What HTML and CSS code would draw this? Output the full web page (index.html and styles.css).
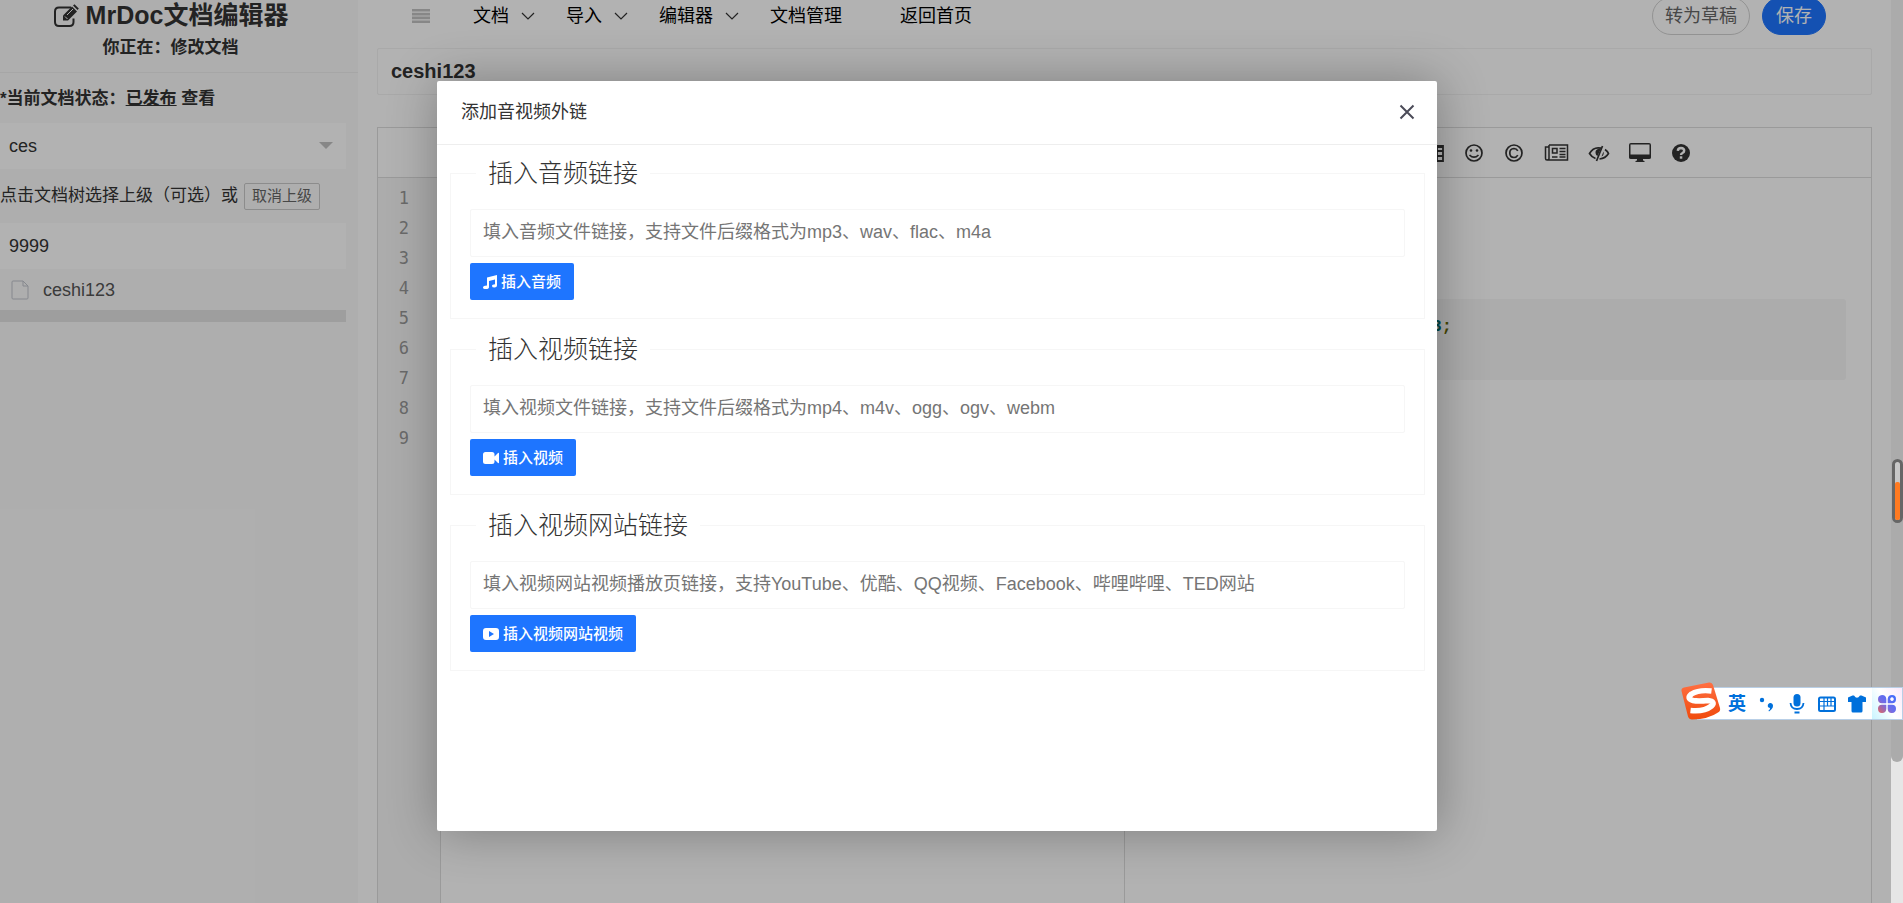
FILE: index.html
```html
<!DOCTYPE html>
<html lang="zh-CN">
<head>
<meta charset="utf-8">
<title>MrDoc文档编辑器</title>
<link rel="stylesheet" href="styles.css">
</head>
<body>
<div class="app">
  <aside class="sidebar">
    <header class="brand">
      <h1 class="brand-title">
        <svg class="brand-icon" viewBox="0 0 26 24" fill="none" stroke="currentColor" stroke-width="2"><path d="M18 3.500H6Q2 3.500 2 7.500V18Q2 22 6 22H16.500Q20.500 22 20.500 18V14.500"/><path d="M10 16.500v-5l9-9 5 5-9 9z" fill="currentColor" stroke="none"/><path d="M20 1.500l1.500-1.300 4.300 4.300-1.300 1.500z" fill="currentColor" stroke="none"/><path d="M12 12.500l2.500 2.500M14 11l6-6" stroke="#fafafa" stroke-width="1"/></svg>
        MrDoc文档编辑器
      </h1>
      <p class="brand-sub">你正在：修改文档</p>
    </header>
    <div class="doc-panel">
      <p class="status">*当前文档状态：<u>已发布</u> <a class="status-link" href="#">查看</a></p>
      <div class="select-wrap">
        <select class="field" aria-label="文集"><option>ces</option></select>
      </div>
      <div class="parent-row"><span>点击文档树选择上级（可选）或</span><button class="btn-small" type="button">取消上级</button></div>
      <input class="field" type="text" value="9999" aria-label="上级文档">
      <a class="tree-item" href="#">
        <svg class="tree-icon" viewBox="0 0 18 20" fill="none" stroke="currentColor"><path d="M12 1H2Q1 1 1 2V18Q1 19 2 19H16Q17 19 17 18V6zV6H17"/></svg>
        ceshi123
      </a>
      <div class="tree-scroll"></div>
    </div>
  </aside>
  <main class="main">
    <nav class="nav">
      <svg class="nav-toggle" viewBox="0 0 18 14" stroke="currentColor" stroke-width="2.600"><path d="M0 1.300h18M0 5.100h18M0 8.900h18M0 12.700h18"/></svg>
      <a class="nav-link nav-drop" href="#">文档<svg class="chevron" viewBox="0 0 14 9" fill="none" stroke="currentColor" stroke-width="1.200"><path d="M1 1l6 6 6-6"/></svg></a>
      <a class="nav-link nav-drop" href="#">导入<svg class="chevron" viewBox="0 0 14 9" fill="none" stroke="currentColor" stroke-width="1.200"><path d="M1 1l6 6 6-6"/></svg></a>
      <a class="nav-link nav-drop" href="#">编辑器<svg class="chevron" viewBox="0 0 14 9" fill="none" stroke="currentColor" stroke-width="1.200"><path d="M1 1l6 6 6-6"/></svg></a>
      <a class="nav-link nav-manage" href="#">文档管理</a>
      <a class="nav-link" href="#">返回首页</a>
      <div class="nav-actions">
        <button class="btn-round" type="button">转为草稿</button>
        <button class="btn-round btn-save" type="button">保存</button>
      </div>
    </nav>
    <input class="doc-title" type="text" value="ceshi123" aria-label="文档标题">
    <section class="editor">
      <div class="toolbar">
        <svg class="tool" viewBox="0 0 22 20" fill="none" stroke="currentColor" stroke-width="1.800"><path d="M2 3h18v15H2zM2 8h18M2 13h18M8 5v13M14 5v13M2 4h18"/></svg>
        <svg class="tool tool-narrow" viewBox="1 0 20 20" fill="none" stroke="currentColor" stroke-width="1.700"><circle cx="11" cy="10" r="8"/><path d="M6.500 12q4.500 4.500 9 0"/><circle cx="8" cy="7.500" r="1.300" fill="currentColor" stroke="none"/><circle cx="14" cy="7.500" r="1.300" fill="currentColor" stroke="none"/></svg>
        <svg class="tool" viewBox="0 0 22 20" fill="none" stroke="currentColor" stroke-width="1.700"><circle cx="11" cy="10" r="8"/><path d="M14.800 7.800Q13.500 5.500 11 5.500Q6.800 5.700 6.800 10Q6.800 14.300 11 14.500Q13.500 14.500 14.800 12.200"/></svg>
        <svg class="tool tool-wide" viewBox="0 0 25 20" fill="none" stroke="currentColor" stroke-width="1.500"><path d="M5 2h18.500v15H3Q1.500 17 1.500 15.500V4H5M5 2v13.500Q5 17 3 17M8.500 5.500h4.500v4.500H8.500zM15.500 5.500h6M15.500 8.500h6M15.500 11.500h6M8 14h5.500M15.500 14h6"/></svg>
        <svg class="tool" viewBox="0 0 22 20" fill="none" stroke="currentColor" stroke-width="1.700"><path d="M13 5.200Q5.500 3.500 1.500 10.500Q3.500 14 7.500 15.500M17 6.500Q19.500 8.200 20.500 10.500Q17.500 15.500 11.500 16"/><path d="M14.500 3L8.500 18"/><path d="M13 5.500Q7 5.500 7.500 10Q7.800 12.500 9.500 13zM15.500 8.500l-2 5Q16.500 12 15.500 8.500z" fill="currentColor" stroke="none"/></svg>
        <svg class="tool" viewBox="0 0 22 20"><path d="M2 0h18q2 0 2 2v12.500q0 1.500-2 1.500h-6v1.500l1.500.5v1h-9v-1l1.500-.5V16H2q-2 0-2-1.500V2Q0 0 2 0zM1.500 1.500v10h19v-10z" fill="currentColor" fill-rule="evenodd"/></svg>
        <svg class="tool" viewBox="0 0 22 20" fill="none"><circle cx="11" cy="10" r="9" fill="currentColor"/><path d="M7.800 7.800Q8 5 11 5Q14.200 5.200 14.200 7.800Q14.200 9.200 12.500 10Q11 10.700 11 12" stroke="#fff" stroke-width="2.400"/><path d="M9.800 13.300h2.500v2.400H9.800z" fill="#fff"/></svg>
      </div>
      <div class="panes">
        <div class="gutter"><span>1</span><span>2</span><span>3</span><span>4</span><span>5</span><span>6</span><span>7</span><span>8</span><span>9</span></div>
        <div class="source"></div>
        <div class="preview"><pre class="code"><span class="num">3</span><span class="pun">;</span></pre></div>
      </div>
    </section>
  </main>
  <div class="page-scroll"><div class="page-thumb"></div></div>
</div>

<div class="shade">
  <div class="dialog" role="dialog" aria-labelledby="dialog-title">
    <header class="dialog-head">
      <h2 class="dialog-title" id="dialog-title">添加音视频外链</h2>
      <button class="dialog-close" type="button" aria-label="关闭"><svg class="close-icon" viewBox="0 0 16 16" stroke="currentColor" stroke-width="2"><path d="M1.500 1.500l13 13M14.500 1.500l-13 13"/></svg></button>
    </header>
    <div class="dialog-body">
      <fieldset class="group">
        <legend class="group-title">插入音频链接</legend>
        <input class="link-input" type="text" aria-label="音频链接" placeholder="填入音频文件链接，支持文件后缀格式为mp3、wav、flac、m4a">
        <button class="btn-insert" type="button"><svg class="insert-icon icon-music" viewBox="0 0 14 14" fill="currentColor"><path d="M4 2.500L14 0v10.500q0 2-2.500 2T9 11q0-1.800 3-1.800V4.500L6 6v6q0 2-3 2T0 12.500q0-2 4-2z"/></svg>插入音频</button>
      </fieldset>
      <fieldset class="group">
        <legend class="group-title">插入视频链接</legend>
        <input class="link-input" type="text" aria-label="视频链接" placeholder="填入视频文件链接，支持文件后缀格式为mp4、m4v、ogg、ogv、webm">
        <button class="btn-insert" type="button"><svg class="insert-icon" viewBox="0 0 16 14" fill="currentColor"><path d="M2.500 1h6.500q2.500 0 2.500 2.500v2L15 2q1-.500 1 .5v9q0 1-1 .5L11.500 8.500v2Q11.500 13 9 13H2.500Q0 13 0 10.500v-7Q0 1 2.500 1z"/></svg>插入视频</button>
      </fieldset>
      <fieldset class="group">
        <legend class="group-title">插入视频网站链接</legend>
        <input class="link-input" type="text" aria-label="视频网站链接" placeholder="填入视频网站视频播放页链接，支持YouTube、优酷、QQ视频、Facebook、哔哩哔哩、TED网站">
        <button class="btn-insert" type="button"><svg class="insert-icon" viewBox="0 0 16 14" fill="currentColor"><path fill-rule="evenodd" d="M3 1h10q3 0 3 3v6q0 3-3 3H3q-3 0-3-3V4q0-3 3-3zM6 4v6l5-3z"/></svg>插入视频网站视频</button>
      </fieldset>
    </div>
  </div>
</div>

<div class="meter"><div class="meter-fill"></div></div>

<div class="ime">
  <svg class="ime-logo" viewBox="0 0 40 38"><defs><linearGradient id="logo" x1="0" y1="0" x2="0" y2="1"><stop offset="0" stop-color="#ff7043"/><stop offset="1" stop-color="#f04a0c"/></linearGradient></defs><path d="M3 5.500L28 .5q3-.5 4 2.500l7 23q.7 3-2 4.500Q28 37 11 37.500q-3 0-4-3L.5 9Q0 6 3 5.500z" fill="url(#logo)"/><path d="M30.500 9Q18 7.500 10.500 12Q5 16.500 12 18.500Q17 19.500 27 18.500Q35 19.500 30.500 24Q23 30 9.500 28.500" fill="none" stroke="#fff" stroke-width="5.500"/></svg>
  <span class="ime-lang">英</span>
  <svg class="ime-icon" viewBox="0 0 18 18" fill="currentColor"><circle cx="4" cy="5" r="2.200"/><path d="M10 9.500q2-2.500 4.500-.5 2 3.500-3.500 7.500l-.5-1q2-1.500 1.500-2.500-3-.5-2-3.500z"/></svg>
  <svg class="ime-icon" viewBox="0 0 18 20" fill="none" stroke="currentColor" stroke-width="1.800"><rect x="5.500" y="0" width="7" height="12.500" rx="3.500" fill="currentColor" stroke="none"/><path d="M2.500 9Q3 15 9 15T15.500 9M6.500 18.500h5"/></svg>
  <svg class="ime-icon" viewBox="0 0 18 18" fill="none" stroke="currentColor"><rect x="1" y="2.500" width="16" height="13.500" rx="1.500" stroke-width="2"/><path d="M2 6.500h14M2 11h14M6 3v8M9.500 3v8M13 3v8M6 11v4" stroke-width="1.200"/></svg>
  <svg class="ime-icon" viewBox="0 0 18 18" fill="currentColor"><path d="M0 2.500L4.500 0.500h1.500Q9 5 12 .5h1.500L18 2.500V7h-3.500v9q0 1.500-1.500 1.500H5Q3.500 17.500 3.500 16V7H0z"/></svg>
  <div class="ime-more"><svg class="ime-icon" viewBox="0 0 18 18"><defs><linearGradient id="petal" x1="0" y1="1" x2="1" y2="0"><stop offset="0" stop-color="#e4645c"/><stop offset=".45" stop-color="#716ce8"/><stop offset="1" stop-color="#3a6cff"/></linearGradient></defs><path fill="url(#petal)" fill-rule="evenodd" d="M4 0q4 0 4.300 4v4.300H4Q0 8 0 4.200T4 0zM14 0q4 0 4 4.200t-4 4.100H9.700V4Q10 0 14 0zM0 13.500q0-3.800 4-3.800h4.300V14Q8 18 4 18T0 13.500zM9.700 9.700H14q4 0 4 4T14 18t-4.300-4zM14 2.300a1.800 1.800 0 1 0 .01 0z"/></svg></div>
</div>
</body>
</html>
```
FILE: styles.css
```css
* { box-sizing: border-box; }

body {
  margin: 0;
  height: 100vh;
  overflow: hidden;
  font-family: "Liberation Sans", "Noto Sans CJK SC", sans-serif;
  font-size: 18px;
  line-height: 30px;
  color: #333;
  background: #fff;
}

h1, h2, p { margin: 0; }
a { color: inherit; text-decoration: none; }
button, input, select { font: inherit; color: inherit; }
svg { display: block; flex: none; }

.app { display: flex; height: 100vh; }

/* Sidebar */
.sidebar {
  flex: none;
  width: 358px;
  background: #fafafa;
  overflow: hidden;
  font-size: 17px;
}
.brand {
  height: 73px;
  border-bottom: 1px solid #eee;
  text-align: center;
  padding-right: 17px;
}
.brand-title {
  display: flex;
  justify-content: center;
  align-items: center;
  gap: 7px;
  font-size: 25px;
  line-height: 31px;
}
.brand-icon { width: 26px; height: 24px; }
.brand-sub { font-weight: bold; line-height: 34px; }
.doc-panel { padding-right: 12px; }
.status {
  padding: 11px 0 9px;
  font-weight: bold;
  white-space: nowrap;
}
.select-wrap { position: relative; }
.select-wrap::after {
  content: "";
  position: absolute;
  right: 13px;
  top: 19px;
  border: 7px solid transparent;
  border-top-color: #c2c2c2;
  border-bottom: 0;
}
.field {
  display: block;
  width: 100%;
  height: 46px;
  padding: 0 9px;
  border: 0;
  background: #fff;
  font-size: 18px;
  appearance: none;
}
.parent-row {
  display: flex;
  align-items: center;
  gap: 6px;
  height: 54px;
  white-space: nowrap;
}
.btn-small {
  height: 27px;
  padding: 0 7px;
  border: 1px solid #c9c9c9;
  border-radius: 2px;
  background: transparent;
  font-size: 15px;
  line-height: 24px;
  color: #666;
}
.tree-item {
  display: flex;
  align-items: center;
  gap: 14px;
  height: 41px;
  padding-left: 11px;
  font-size: 18px;
  color: #555;
}
.tree-icon { width: 18px; height: 20px; color: #c0c4cc; }
.tree-scroll { height: 12px; background: #e2e2e2; }

/* Main column */
.main {
  flex: 1;
  display: flex;
  flex-direction: column;
  min-width: 0;
  padding: 0 19px;
}
.nav {
  display: flex;
  align-items: center;
  height: 32px;
  padding: 0 46px 0 35px;
  color: #000;
}
.nav-toggle { width: 18px; height: 14px; margin-right: 43px; color: #c2c2c2; }
.nav-link { white-space: nowrap; }
.nav-drop { display: flex; align-items: center; gap: 12px; margin-right: 31px; }
.nav-manage { margin-right: 58px; }
.chevron { width: 14px; height: 9px; color: #333; }
.nav-actions { display: flex; gap: 12px; margin-left: auto; }
.btn-round {
  height: 38px;
  padding: 0 12px;
  border: 1px solid #d2d2d2;
  border-radius: 19px;
  background: transparent;
  color: #666;
}
.btn-save { padding: 0 13px; border-color: #1e75ff; background: #1e75ff; color: #fff; }
.doc-title {
  width: 100%;
  height: 47px;
  margin: 16px 0 32px;
  padding: 0 13px;
  border: 1px solid #f2f2f2;
  border-radius: 2px;
  background: transparent;
  font-size: 20px;
  font-weight: bold;
}
.editor {
  flex: 1;
  display: flex;
  flex-direction: column;
  border: 1px solid #ddd;
  border-bottom: 0;
}
.toolbar {
  display: flex;
  justify-content: flex-end;
  align-items: center;
  gap: 19px;
  height: 50px;
  padding-right: 179px;
  border-bottom: 1px solid #ddd;
}
.tool { width: 22px; height: 20px; }
.tool-narrow { width: 20px; }
.tool-wide { width: 25px; }
.panes { flex: 1; display: flex; }
.gutter {
  display: flex;
  flex-direction: column;
  flex: none;
  width: 63px;
  padding: 5px 31px 0 0;
  border-right: 1px solid #ddd;
  background: #f7f7f7;
  font-family: "DejaVu Sans Mono", monospace;
  font-size: 17px;
  text-align: right;
  color: #999;
}
.source { flex: 1; border-right: 1px solid #ddd; }
.preview { flex: none; width: 50%; padding: 121px 25px 0; }
.code {
  height: 81px;
  margin: 0;
  padding: 13px 0 0 282px;
  border-radius: 3px;
  background: #f6f6f6;
  font-family: "Liberation Mono", monospace;
  font-size: 17px;
  font-weight: bold;
}
.num { color: #066; }
.pun { color: #660; }

.page-scroll { flex: none; width: 12px; background: #e6e6e6; }
.page-thumb { height: 762px; border-radius: 0 0 6px 6px; background: #ababab; }

/* Dialog */
.shade {
  position: absolute;
  inset: 0 12px 0 0;
  display: flex;
  justify-content: center;
  align-items: flex-start;
  padding: 81px 17px 0 0;
  background: rgba(0, 0, 0, .3);
}
.dialog {
  width: 1000px;
  min-height: 750px;
  border-radius: 2px;
  background: #fff;
  box-shadow: 1px 1px 50px rgba(0, 0, 0, .3);
}
.dialog-head {
  display: flex;
  justify-content: space-between;
  align-items: center;
  height: 64px;
  padding: 0 22px 2px 24px;
  border-bottom: 1px solid #eee;
}
.dialog-title { font-size: 18px; font-weight: 400; }
.dialog-close { padding: 0; border: 0; background: none; color: #4b4b58; }
.close-icon { width: 16px; height: 16px; }
.dialog-body { padding: 13px 12px 13px 13px; }
.group {
  margin: 0 0 15px;
  padding: 21px 19px 18px;
  border: 1px solid #f6f6f6;
}
.group-title {
  margin-left: 6px;
  padding: 0 12px;
  font-size: 25px;
  font-weight: 300;
}
.link-input {
  display: block;
  width: 100%;
  height: 48px;
  margin-bottom: 6px;
  padding: 0 12px 2px;
  border: 1px solid #f6f6f6;
  border-radius: 2px;
  background: #fff;
}
.link-input::placeholder { color: #757575; }
.btn-insert {
  display: flex;
  align-items: center;
  gap: 4px;
  height: 37px;
  padding: 0 13px;
  border: 0;
  border-radius: 2px;
  background: #1e75ff;
  font-size: 15px;
  font-weight: 500;
  color: #fff;
}
.insert-icon { width: 16px; height: 14px; }
.icon-music { width: 14px; }

/* Floating widgets */
.meter {
  position: absolute;
  right: 0;
  top: 459px;
  display: flex;
  align-items: flex-end;
  width: 11px;
  height: 64px;
  border: 3px solid #666;
  border-radius: 6px;
  background: #c8c8c8;
}
.meter-fill { width: 100%; height: 38px; border-radius: 2px; background: #ff7a21; }
.ime {
  position: absolute;
  right: 0;
  top: 687px;
  display: flex;
  align-items: center;
  gap: 12px;
  width: 206px;
  height: 33px;
  border: 1px solid #b9cfe6;
  background: #fff;
  color: #0070db;
}
.ime-logo { width: 40px; height: 38px; margin: -6px -5px 0 -17px; }
.ime-lang { width: 18px; font-weight: bold; }
.ime-icon { width: 18px; height: 20px; }
.ime-more {
  display: flex;
  align-items: center;
  height: 31px;
  margin-left: -6px;
  padding: 0 6px;
  background: linear-gradient(60deg, #c9f4ff, #fff 50%, #fbe9fb);
}
```
